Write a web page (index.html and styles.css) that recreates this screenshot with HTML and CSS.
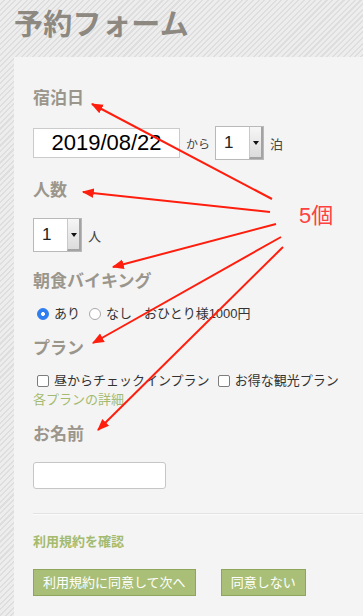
FILE: index.html
```html
<!DOCTYPE html>
<html lang="ja">
<head>
<meta charset="utf-8">
<title>予約フォーム</title>
<link rel="stylesheet" href="styles.css">
</head>
<body>
<h1 class="page-title">予約フォーム</h1>
<main class="panel">
  <section class="field field--date">
    <h2 class="field-label">宿泊日</h2>
    <div class="row">
      <input class="date-input" type="text" value="2019/08/22">
      <span class="unit unit--small">から</span>
      <span class="sel"><span class="sel-value">1</span><span class="sel-btn"></span></span>
      <span class="unit">泊</span>
    </div>
  </section>
  <section class="field field--people">
    <h2 class="field-label">人数</h2>
    <div class="row">
      <span class="sel"><span class="sel-value">1</span><span class="sel-btn"></span></span>
      <span class="unit">人</span>
    </div>
  </section>
  <section class="field field--breakfast">
    <h2 class="field-label field-label--tight">朝食バイキング</h2>
    <div class="row row--choices">
      <label class="choice"><input class="radio" type="radio" name="bf" checked>あり</label>
      <label class="choice"><input class="radio" type="radio" name="bf">なし</label>
      <span class="price">おひとり様1000円</span>
    </div>
  </section>
  <section class="field field--plan">
    <h2 class="field-label field-label--tight">プラン</h2>
    <div class="row row--choices">
      <label class="choice"><input class="check" type="checkbox">昼からチェックインプラン</label>
      <label class="choice"><input class="check" type="checkbox">お得な観光プラン</label>
    </div>
    <a class="link" href="#">各プランの詳細</a>
  </section>
  <section class="field field--name">
    <h2 class="field-label">お名前</h2>
    <input class="text-input" type="text">
  </section>
  <hr class="divider">
  <a class="link link--bold terms" href="#">利用規約を確認</a>
  <div class="actions">
    <button class="btn" type="button">利用規約に同意して次へ</button>
    <button class="btn" type="button">同意しない</button>
  </div>
</main>

<svg class="annotations" width="363" height="616" viewBox="0 0 363 616">
  <defs>
    <marker id="ah" viewBox="0 0 10 10" refX="9" refY="5" markerWidth="6" markerHeight="6" orient="auto">
      <path d="M0,1 L10,5 L0,9 z" fill="#ff1d0d"/>
    </marker>
  </defs>
  <g stroke="#ff1d0d" stroke-width="2" fill="none" marker-end="url(#ah)">
    <line x1="272" y1="199" x2="92" y2="104"/>
    <line x1="270" y1="212" x2="83" y2="192"/>
    <line x1="276" y1="224" x2="113" y2="267"/>
    <line x1="281" y1="237" x2="93" y2="343"/>
    <line x1="283" y1="247" x2="98" y2="430"/>
  </g>
</svg>
<div class="annot-label">5個</div>
</body>
</html>
```

FILE: styles.css
```css
html, body {
  margin: 0;
  padding: 0;
}
body {
  position: relative;
  width: 363px;
  height: 616px;
  overflow: hidden;
  font-family: "Liberation Sans", "Noto Sans CJK JP", sans-serif;
  color: #333;
  background-color: #ebebeb;
  background-image: repeating-linear-gradient(135deg, #ededed 0 2.5px, #dedede 2.5px 4px);
}
.page-title {
  margin: 0 0 17px;
  padding: 10px 0 0 14px;
  font-size: 29px;
  line-height: 30px;
  font-weight: bold;
  color: #8d8880;
  letter-spacing: 0.3px;
}
.panel {
  margin-left: 14px;
  background: #f4f4f4;
  padding: 32px 0 40px 19px;
}
.field-label {
  margin: 0 0 17px;
  font-size: 17px;
  line-height: 20px;
  font-weight: bold;
  color: #9b968c;
}
.field-label--tight {
  margin-bottom: 13px;
}
.field {
  margin-bottom: 21px;
}
.field--people { margin-bottom: 20px; }
.field--breakfast { margin-bottom: 16px; }
.field--plan { margin-bottom: 17px; }
.field--name { margin-bottom: 24px; }

.row {
  display: flex;
  align-items: center;
}
.date-input {
  box-sizing: border-box;
  width: 147px;
  height: 30px;
  margin: 0;
  padding: 0;
  border: 1px solid #cbcbcb;
  background: #fff;
  font-family: "Liberation Sans", sans-serif;
  font-size: 22px;
  color: #000;
  text-align: center;
  outline: none;
}
.unit {
  font-size: 13px;
  color: #444;
  margin: 0 6px;
}
.unit--small {
  font-size: 12px;
  margin: 0 5px 0 6px;
}
.sel {
  box-sizing: border-box;
  display: inline-flex;
  width: 49px;
  height: 34px;
  border: 1px solid #b9b9b9;
  background: #fff;
}
.sel-value {
  flex: 1;
  padding-left: 8px;
  font-family: "Liberation Sans", sans-serif;
  font-size: 17px;
  line-height: 32px;
  color: #222;
}
.sel-btn {
  position: relative;
  box-sizing: border-box;
  width: 14px;
  background: linear-gradient(#f6f6f6, #dcdcdc);
  border-left: 1px solid #c9c9c9;
  border-right: 2px solid #a3a3a3;
  border-bottom: 2px solid #a3a3a3;
}
.sel-btn::after {
  content: "";
  position: absolute;
  left: 3px;
  top: 14px;
  border-left: 3px solid transparent;
  border-right: 3px solid transparent;
  border-top: 4px solid #111;
}

.row--choices {
  font-size: 13px;
  line-height: 18px;
  color: #333;
}
.choice {
  display: inline-flex;
  align-items: center;
  margin-right: 9px;
}
.choice:first-child {
  margin-left: 4px;
}
.radio, .check {
  appearance: none;
  -webkit-appearance: none;
  box-sizing: border-box;
  width: 12px;
  height: 12px;
  margin: 0 5px 0 0;
  background: #fff;
}
.radio {
  border: 1px solid #a9a9a9;
  border-radius: 50%;
}
.radio:checked {
  border-color: #2f7ef0;
  background: radial-gradient(circle, #fff 0 1.8px, #2f7ef0 2.2px);
}
.check {
  border: 1px solid #7d7d7d;
  border-radius: 2px;
}
.price {
  margin-left: 3px;
}
.field--plan .choice {
  margin-right: 8px;
}
.link {
  display: block;
  font-size: 13px;
  line-height: 16px;
  color: #a4bb6f;
  text-decoration: none;
  margin-top: 2px;
}
.link--bold {
  font-weight: bold;
}
.text-input {
  box-sizing: border-box;
  display: block;
  width: 133px;
  height: 27px;
  margin: 0;
  border: 1px solid #c6c6c6;
  border-radius: 3px;
  background: #fff;
  outline: none;
}
.divider {
  margin: 0;
  height: 0;
  border: 0;
  border-top: 1px solid #e2e2e2;
  border-bottom: 1px solid #fbfbfb;
}
.terms {
  margin-top: 19px;
}
.actions {
  display: flex;
  gap: 25px;
  margin-top: 19px;
}
.btn {
  box-sizing: border-box;
  height: 27px;
  margin: 0;
  padding: 0 9px;
  border: 1px solid #8ea55c;
  border-radius: 0;
  background: #a9bf77;
  color: #fff;
  font-family: "Liberation Sans", "Noto Sans CJK JP", sans-serif;
  font-size: 13px;
  line-height: 25px;
}
.annotations {
  position: absolute;
  top: 0;
  left: 0;
  pointer-events: none;
}
.annot-label {
  position: absolute;
  left: 299px;
  top: 202px;
  font-family: "Liberation Sans", "Noto Sans CJK JP", sans-serif;
  font-size: 22px;
  line-height: 28px;
  color: #ff4040;
}
```
